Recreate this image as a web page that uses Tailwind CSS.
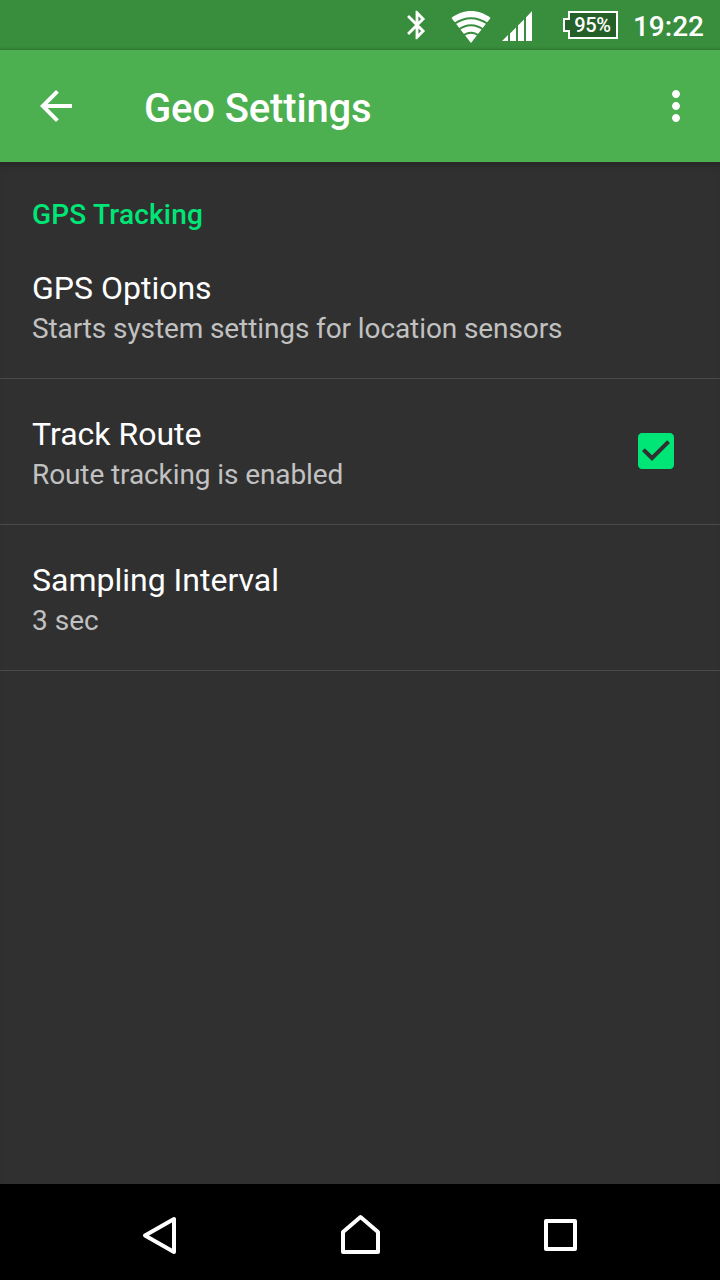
<!DOCTYPE html>
<html lang="en">
  <head>
    <meta charset="UTF-8">
    <meta name="viewport" content="width=device-width, initial-scale=1.0">
    <title>Geo Settings</title>
    <script src="https://cdn.jsdelivr.net/npm/@tailwindcss/browser@4"></script>
  </head>
  <body class="bg-[#303030] font-['Roboto',sans-serif] text-white">
    <div class="flex h-[1280px] w-[720px] flex-col overflow-hidden">
      <!-- Status bar -->
      <div class="flex h-[50px] shrink-0 items-start justify-end bg-[#388e3c] pr-4 shadow-[inset_0_-3px_3px_-2px_rgba(0,0,0,0.2)]">
        <svg class="mt-2 mr-[17px] size-[34px]" viewBox="0 0 24 24" fill="currentColor">
          <path d="M17.71 7.71L12 2h-1v7.59L6.41 5 5 6.41 10.59 12 5 17.59 6.41 19 11 14.41V22h1l5.71-5.71-4.3-4.29 4.3-4.29zM13 5.83l1.88 1.88L13 9.59V5.83zm1.88 10.46L13 18.17v-3.76l1.88 1.88z" />
        </svg>
        <svg class="mt-[10px] mr-[11px] h-[34px] w-10" viewBox="0 0 40 34">
          <path d="M20 33L0.5 8C12 -1.300 28 -1.300 39.500 8z" fill="#fff" />
          <path d="M3 14Q20 2.500 37 14M7 20Q20 10.500 33 20M11 26.500Q20 19 29 26.500" fill="none" stroke="#388e3c" stroke-width="2" />
        </svg>
        <svg class="mt-[11px] mr-[30px] h-[30px] w-[31px]" viewBox="0 0 31 30" fill="currentColor">
          <path d="M0 30L6 24v6zM8 30V22.500L14 16.500V30zM16 30V14.500L22 8.500V30zM24 30V6.500L30 0V30z" />
        </svg>
        <div class="relative mt-[11px] mr-[15px] flex h-7 w-[55px] items-center justify-center pl-1">
          <svg class="absolute inset-0" width="55" height="28" viewBox="0 0 55 28">
            <path d="M6 1H54V27H6V20H1V8H6z" fill="#266029" stroke="#fff" stroke-width="2" />
          </svg>
          <span class="relative text-[20px] leading-none font-medium tracking-[-0.3px]">95%</span>
        </div>
        <span class="mt-[10px] text-[28px] leading-[34px] font-medium">19:22</span>
      </div>

      <!-- App bar -->
      <div class="flex h-28 shrink-0 items-center bg-[#4caf50] pr-5 pl-8">
        <svg class="size-12" viewBox="0 0 24 24" fill="currentColor">
          <path d="M20 11H7.830l5.590-5.590L12 4l-8 8 8 8 1.410-1.410L7.830 13H20v-2z" />
        </svg>
        <h1 class="mt-1.5 ml-16 grow text-[40px] font-medium tracking-[-0.15px]">Geo Settings</h1>
        <svg class="size-12" viewBox="0 0 24 24" fill="currentColor">
          <path d="M12 8c1.100 0 2-.9 2-2s-.9-2-2-2-2 .9-2 2 .9 2 2 2zm0 2c-1.100 0-2 .9-2 2s.9 2 2 2 2-.9 2-2-.9-2-2-2zm0 6c-1.100 0-2 .9-2 2s.9 2 2 2 2-.9 2-2-.9-2-2-2z" />
        </svg>
      </div>

      <!-- Preferences -->
      <div class="grow shadow-[inset_0_8px_8px_-6px_rgba(0,0,0,0.25)]">
        <h2 class="h-[71px] px-8 pt-[33px] text-[28px] leading-10 font-medium tracking-[0.2px] text-[#00e676]">GPS Tracking</h2>
        <div class="flex h-[146px] items-center border-b border-[#4a4a4a] px-8">
          <div class="mt-1.5">
            <div class="text-[32px] leading-10">GPS Options</div>
            <div class="mt-px text-[28px] leading-10 tracking-[-0.1px] text-[#c1c1c1]">Starts system settings for location sensors</div>
          </div>
        </div>
        <div class="flex h-[146px] items-center justify-between border-b border-[#4a4a4a] pr-10 pl-8">
          <div class="mt-1.5">
            <div class="text-[32px] leading-10">Track Route</div>
            <div class="mt-px text-[28px] leading-10 tracking-[-0.1px] text-[#c1c1c1]">Route tracking is enabled</div>
          </div>
          <svg class="mb-px size-12" viewBox="0 0 24 24" fill="#00e676">
            <path d="M19 3H5c-1.110 0-2 .9-2 2v14c0 1.100.89 2 2 2h14c1.110 0 2-.9 2-2V5c0-1.100-.89-2-2-2zm-9 14l-5-5 1.410-1.410L10 14.170l7.590-7.590L19 8l-9 9z" />
          </svg>
        </div>
        <div class="flex h-[146px] items-center border-b border-[#4a4a4a] px-8">
          <div class="mt-1.5">
            <div class="text-[32px] leading-10">Sampling Interval</div>
            <div class="mt-px text-[28px] leading-10 text-[#c1c1c1]">3 sec</div>
          </div>
        </div>
      </div>

      <!-- Navigation bar -->
      <div class="flex h-24 shrink-0 items-center justify-between bg-black px-[136px]">
        <svg class="size-12" viewBox="0 0 48 48" fill="none" stroke="#fff" stroke-width="4" stroke-linejoin="round">
          <path d="M9 27.500L38 11V44z" />
        </svg>
        <svg class="size-12" viewBox="0 0 48 48" fill="none" stroke="#fff" stroke-width="4" stroke-linejoin="round">
          <path d="M7 44V24L24.500 9L42 24V44z" />
        </svg>
        <svg class="size-12" viewBox="0 0 48 48" fill="none" stroke="#fff" stroke-width="4" stroke-linejoin="round">
          <path d="M10 13H39V41H10z" />
        </svg>
      </div>
    </div>
  </body>
</html>
